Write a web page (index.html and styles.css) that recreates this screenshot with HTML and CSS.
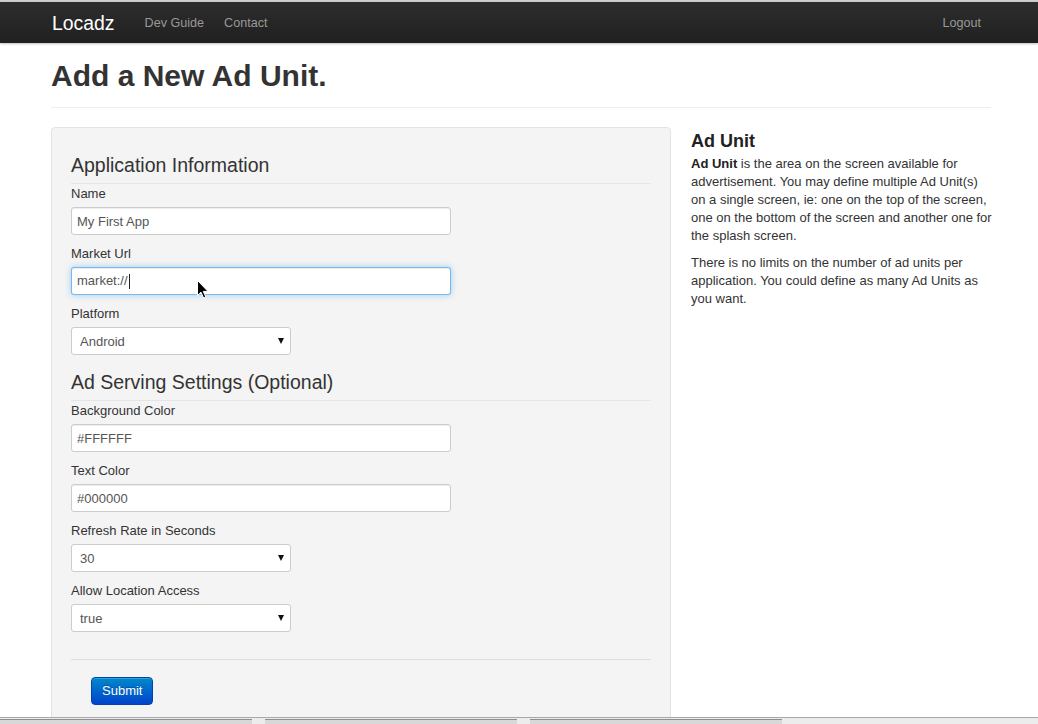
FILE: index.html
```html
<!DOCTYPE html>
<html>
<head>
<meta charset="utf-8">
<title>Locadz - Add a New Ad Unit</title>
<link rel="stylesheet" href="styles.css">
</head>
<body>
<div class="topstrip"></div>
<div class="navbar">
  <div class="container nav-inner">
    <a class="brand" href="#">Locadz</a>
    <ul class="nav">
      <li><a href="#">Dev Guide</a></li>
      <li><a href="#">Contact</a></li>
    </ul>
    <ul class="nav nav-right">
      <li><a href="#">Logout</a></li>
    </ul>
  </div>
</div>

<div class="container">
  <div class="page-header">
    <h1>Add a New Ad Unit.</h1>
  </div>
  <div class="row">
    <div class="well">
      <div class="legend">Application Information</div>
      <label class="lbl">Name</label>
      <input class="field" type="text" value="My First App">
      <label class="lbl">Market Url</label>
      <div class="field focused"><span>market://</span><span class="caret"></span>
        <svg class="pointer" width="12" height="19" viewBox="0 0 12 19"><path d="M0.5 0.5 L0.5 15.5 L4 12.2 L6.6 18 L8.8 17 L6.3 11.4 L11 11.4 Z" fill="#000" stroke="#fff" stroke-width="1"/></svg>
      </div>
      <label class="lbl">Platform</label>
      <div class="select"><select><option>Android</option></select></div>

      <div class="legend">Ad Serving Settings (Optional)</div>
      <label class="lbl">Background Color</label>
      <input class="field" type="text" value="#FFFFFF">
      <label class="lbl">Text Color</label>
      <input class="field" type="text" value="#000000">
      <label class="lbl">Refresh Rate in Seconds</label>
      <div class="select"><select><option>30</option></select></div>
      <label class="lbl">Allow Location Access</label>
      <div class="select"><select><option>true</option></select></div>

      <div class="form-actions">
        <button class="btn-primary" type="button">Submit</button>
      </div>
    </div>
    <div class="side">
      <h3>Ad Unit</h3>
      <p><b>Ad Unit</b> is the area on the screen available for advertisement. You may define multiple Ad Unit(s) on a single screen, ie: one on the top of the screen, one on the bottom of the screen and another one for the splash screen.</p>
      <p>There is no limits on the number of ad units per application. You could define as many Ad Units as you want.</p>
    </div>
  </div>
</div>

<div class="bottombar">
  <span class="seg"></span><span class="seg"></span><span class="seg"></span>
</div>
</body>
</html>
```

FILE: styles.css
```css
html, body {
  margin: 0;
  padding: 0;
  background: #fff;
  font-family: "Liberation Sans", Arial, Helvetica, sans-serif;
  font-size: 13px;
  line-height: 18px;
  color: #333;
}

.topstrip {
  height: 2px;
  background: #cfcfcf;
}

.navbar {
  height: 41px;
  background: linear-gradient(#2d2d2d, #202020);
  box-shadow: 0 1px 2px rgba(0,0,0,0.25);
}

.container {
  width: 940px;
  margin: 0 0 0 calc(50% - 468px);
}

.nav-inner {
  display: flex;
  align-items: center;
  height: 41px;
}

.brand {
  font-size: 19.4px;
  color: #fff;
  text-decoration: none;
  padding: 1px 20px 0 1px;
  line-height: 40px;
}

.nav {
  list-style: none;
  margin: 0;
  padding: 0;
  display: flex;
}

.nav a {
  display: block;
  padding: 2px 10px 0;
  color: #999;
  text-decoration: none;
  line-height: 39px;
  font-size: 12.6px;
}

.nav-right {
  margin-left: auto;
}

.page-header {
  margin-top: 15px;
  padding-bottom: 13px;
  border-bottom: 1px solid #eee;
  margin-bottom: 19px;
}

.page-header h1 {
  margin: 0;
  font-size: 30px;
  line-height: 36px;
  font-weight: bold;
  color: #333;
}

.row {
  display: flex;
  gap: 20px;
  align-items: flex-start;
}

.well {
  flex: none;
  box-sizing: border-box;
  width: 620px;
  min-height: 620px;
  padding: 19px;
  background: #f4f4f4;
  border: 1px solid #e3e3e3;
  border-radius: 4px;
  display: flex;
  flex-direction: column;
  align-items: flex-start;
}

.legend {
  align-self: stretch;
  font-size: 19.5px;
  line-height: 36px;
  color: #333;
  border-bottom: 1px solid #e5e5e5;
}

.lbl {
  display: block;
  line-height: 18px;
  margin: 1px 0 4px 0;
  color: #333;
}

.field {
  box-sizing: border-box;
  width: 380px;
  height: 28px;
  margin: 0 0 9px 0;
  padding: 4px 5px;
  font-family: inherit;
  font-size: 13px;
  line-height: 18px;
  color: #555;
  background: #fff;
  border: 1px solid #ccc;
  border-radius: 3px;
  box-shadow: inset 0 1px 1px rgba(0,0,0,0.075);
  outline: none;
}

.focused {
  position: relative;
  display: flex;
  align-items: center;
  border-color: rgba(82,168,236,0.8);
  box-shadow: inset 0 1px 1px rgba(0,0,0,0.075), 0 0 6px rgba(82,168,236,0.5);
}

.caret {
  display: inline-block;
  width: 1px;
  height: 15px;
  background: #222;
  margin-left: 1px;
}

.pointer {
  position: absolute;
  left: 125px;
  top: 12px;
}

.select {
  position: relative;
  width: 220px;
  margin-bottom: 9px;
}

.select select {
  -webkit-appearance: none;
  appearance: none;
  box-sizing: border-box;
  width: 220px;
  height: 28px;
  padding: 0 8px;
  font-family: inherit;
  font-size: 13px;
  color: #555;
  background: #fff;
  border: 1px solid #ccc;
  border-radius: 3px;
  outline: none;
}

.select::after {
  content: "";
  position: absolute;
  right: 7px;
  top: 11px;
  width: 0;
  height: 0;
  border-left: 3.5px solid transparent;
  border-right: 3.5px solid transparent;
  border-top: 6px solid #111;
  pointer-events: none;
}

.form-actions {
  align-self: stretch;
  margin-top: 18px;
  padding: 17px 20px 18px;
  border-top: 1px solid #ddd;
}

.btn-primary {
  height: 28px;
  padding: 4px 10px;
  font-family: inherit;
  font-size: 13px;
  line-height: 18px;
  color: #fff;
  background: linear-gradient(#0088cc, #0044cc);
  border: 1px solid #0044aa;
  border-radius: 4px;
  box-shadow: inset 0 1px 0 rgba(255,255,255,0.2);
  text-shadow: 0 -1px 0 rgba(0,0,0,0.25);
}

.side {
  flex: none;
  width: 302px;
}

.side h3 {
  margin: 0;
  font-size: 18px;
  line-height: 28px;
  font-weight: bold;
  color: #222;
}

.side p {
  margin: 0 0 9px 0;
  color: #333;
}

.side b {
  color: #222;
}

.bottombar {
  position: fixed;
  left: 0;
  right: 0;
  bottom: 0;
  height: 5px;
  background: #ececec;
  border-top: 1px solid #a8a8a8;
  display: flex;
  gap: 13px;
  padding-top: 1px;
}

.seg {
  width: 252px;
  height: 4px;
  background: #d8d8d8;
  border-top: 1px solid #8e8e8e;
}
```
